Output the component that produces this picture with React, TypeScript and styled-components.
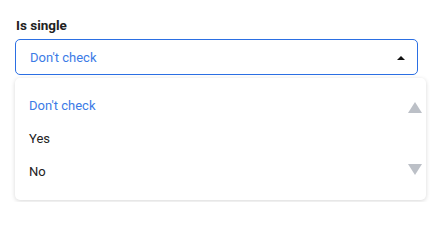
import React, { useState } from "react";
import styled, { createGlobalStyle } from "styled-components";

const GlobalStyle = createGlobalStyle`
  html, body {
    margin: 0;
    background: #ffffff;
    font-family: Roboto, "Liberation Sans", Arial, sans-serif;
  }
  body {
    min-height: 202px;
  }
`;

const Field = styled.div`
  padding: 16px 0 0 15px;
  display: flex;
  flex-direction: column;
  align-items: flex-start;
`;

const Label = styled.div`
  font-size: 13.5px;
  font-weight: 700;
  color: #222222;
  line-height: 18px;
  padding-left: 1px;
  margin-bottom: 5px;
`;

const Trigger = styled.div`
  box-sizing: border-box;
  width: 403px;
  height: 36px;
  border-width: 1px;
  border-style: solid;
  border-color: #2b6fe3;
  border-radius: 5px;
  display: flex;
  align-items: center;
  justify-content: space-between;
  padding: 0 12px 0 14px;
  font-size: 13px;
  color: #3b7be6;
`;

const Caret = styled.span`
  width: 0;
  height: 0;
  border-left: 4px solid transparent;
  border-right: 4px solid transparent;
  border-bottom: 4px solid #111111;
  margin-top: 2px;
`;

const Menu = styled.div`
  margin-top: 3px;
  width: 411px;
  height: 122px;
  box-sizing: border-box;
  background: #ffffff;
  border-radius: 5px;
  box-shadow: 0 1px 4px rgba(0, 0, 0, 0.16);
  display: flex;
  justify-content: space-between;
  padding: 11px 4px 0 14px;
`;

const Options = styled.ul`
  list-style: none;
  margin: 0;
  padding: 0;
`;

const Option = styled.li<{ $selected?: boolean }>`
  height: 33px;
  display: flex;
  align-items: center;
  font-size: 13px;
  color: ${(p) => (p.$selected ? "#3b7be6" : "#222222")};
  cursor: pointer;
`;

const Scroll = styled.div`
  display: flex;
  flex-direction: column;
  justify-content: space-between;
  padding: 13px 0 25px;
`;

const ScrollArrow = styled.span<{ $down?: boolean }>`
  width: 0;
  height: 0;
  border-left: 7.5px solid transparent;
  border-right: 7.5px solid transparent;
  ${(p) =>
    p.$down
      ? "border-top: 11px solid #bcc0c7;"
      : "border-bottom: 11px solid #bcc0c7;"}
`;

const options = ["Don't check", "Yes", "No"];

export default function App() {
  const [value, setValue] = useState("Don't check");

  return (
    <>
      <GlobalStyle />
      <Field>
        <Label>Is single</Label>
        <Trigger>
          <span>{value}</span>
          <Caret />
        </Trigger>
        <Menu>
          <Options>
            {options.map((o) => (
              <Option key={o} $selected={o === value} onClick={() => setValue(o)}>
                {o}
              </Option>
            ))}
          </Options>
          <Scroll>
            <ScrollArrow />
            <ScrollArrow $down />
          </Scroll>
        </Menu>
      </Field>
    </>
  );
}
